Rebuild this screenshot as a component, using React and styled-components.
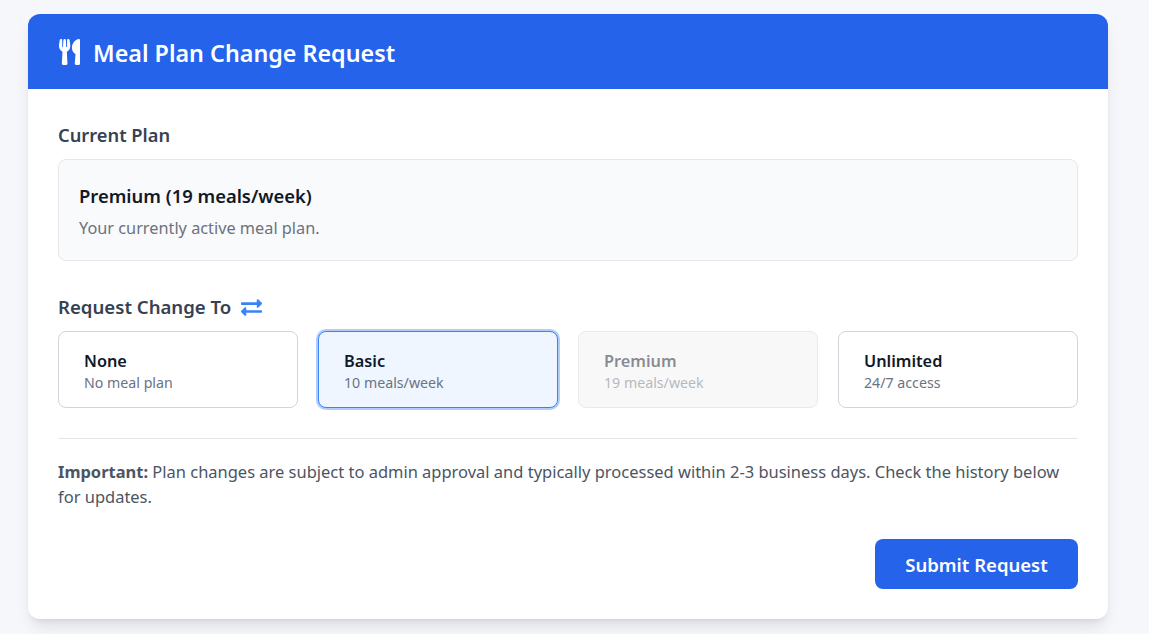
import styled, { createGlobalStyle } from "styled-components";
import { FaUtensils, FaExchangeAlt } from "react-icons/fa";

const plans = [
  { name: "None", detail: "No meal plan" },
  { name: "Basic", detail: "10 meals/week", selected: true },
  { name: "Premium", detail: "19 meals/week", disabled: true },
  { name: "Unlimited", detail: "24/7 access" },
];

const App = () => {
  return (
    <>
      <GlobalStyle />
      <Card>
        <Header>
          <MealIcon />
          <Title>Meal Plan Change Request</Title>
        </Header>
        <Body>
          <Label>Current Plan</Label>
          <CurrentBox>
            <CurrentName>Premium (19 meals/week)</CurrentName>
            <CurrentNote>Your currently active meal plan.</CurrentNote>
          </CurrentBox>
          <RequestLabel>
            Request Change To
            <FaExchangeAlt size={21} color="#3b82f6" />
          </RequestLabel>
          <Options>
            {plans.map((plan) => (
              <Option key={plan.name} $selected={plan.selected} $disabled={plan.disabled}>
                <OptionName>{plan.name}</OptionName>
                <OptionDetail>{plan.detail}</OptionDetail>
              </Option>
            ))}
          </Options>
          <Notice>
            <strong>Important:</strong> Plan changes are subject to admin approval and typically
            processed within 2-3 business days. Check the history below for updates.
          </Notice>
          <Actions>
            <SubmitButton>Submit Request</SubmitButton>
          </Actions>
        </Body>
      </Card>
    </>
  );
};

const GlobalStyle = createGlobalStyle`
  html, body {
    margin: 0;
    background: #f5f7fb;
  }
  body {
    font-family: "Noto Sans", "Open Sans", sans-serif;
    color: #111827;
  }
  * {
    box-sizing: border-box;
  }
`;

const Card = styled.div`
  width: 1080px;
  margin: 14px 0 15px 28px;
  background: #ffffff;
  border-radius: 12px;
  overflow: hidden;
  box-shadow: 0 10px 15px -3px rgba(0, 0, 0, 0.1), 0 4px 6px -4px rgba(0, 0, 0, 0.1);
`;

const Header = styled.div`
  height: 75px;
  padding: 0 30px;
  display: flex;
  align-items: center;
  gap: 13px;
  background: #2563eb;
  color: #ffffff;
`;

const MealIcon = styled(FaUtensils)`
  width: 21px;
  height: 26px;
  margin-left: 1px;
`;

const Title = styled.h1`
  margin: 0;
  padding-top: 2px;
  font-size: 23.3px;
  font-weight: 600;
`;

const Body = styled.div`
  padding: 30px;
`;

const Label = styled.div`
  padding-top: 1px;
  font-size: 18.3px;
  line-height: 30px;
  font-weight: 600;
  color: #374151;
  margin-bottom: 9px;
`;

const RequestLabel = styled(Label)`
  display: flex;
  align-items: center;
  gap: 10px;
  margin-top: 30px;
  font-size: 18.6px;
`;

const CurrentBox = styled.div`
  height: 102px;
  padding: 20px;
  background: #f9fafb;
  border: 1px solid #e5e7eb;
  border-radius: 8px;
`;

const CurrentName = styled.div`
  font-size: 18.4px;
  line-height: 32px;
  font-weight: 600;
`;

const CurrentNote = styled.div`
  margin-top: 4px;
  font-size: 16.3px;
  line-height: 24px;
  color: #6b7280;
`;

const Options = styled.div`
  display: grid;
  grid-template-columns: repeat(4, 1fr);
  gap: 20px;
  padding-bottom: 30px;
  border-bottom: 1px solid #e5e7eb;
`;

const Option = styled.div`
  height: 77px;
  padding: 18px 25px;
  border-radius: 8px;
  border: 1px solid ${(props) => (props.$selected ? "#3b82f6" : "#d1d5db")};
  background: ${(props) => (props.$selected ? "#eff6ff" : props.$disabled ? "#f3f3f3" : "#ffffff")};
  box-shadow: ${(props) => (props.$selected ? "0 0 0 2px rgba(59, 130, 246, 0.4)" : "none")};
  opacity: ${(props) => (props.$disabled ? 0.5 : 1)};
`;

const OptionName = styled.div`
  font-size: 16.3px;
  line-height: 22px;
  font-weight: 600;
`;

const OptionDetail = styled.div`
  font-size: 14.2px;
  line-height: 22px;
  color: #6b7280;
`;

const Notice = styled.p`
  margin: 20px 0 0;
  font-size: 16.48px;
  line-height: 25px;
  color: #4b5563;

  strong {
    font-weight: 700;
  }
`;

const Actions = styled.div`
  display: flex;
  justify-content: flex-end;
  margin-top: 30px;
`;

const SubmitButton = styled.button`
  width: 203px;
  height: 50px;
  border: none;
  border-radius: 8px;
  background: #2563eb;
  color: #ffffff;
  font-family: inherit;
  font-size: 18.5px;
  font-weight: 600;
`;

export default App;
